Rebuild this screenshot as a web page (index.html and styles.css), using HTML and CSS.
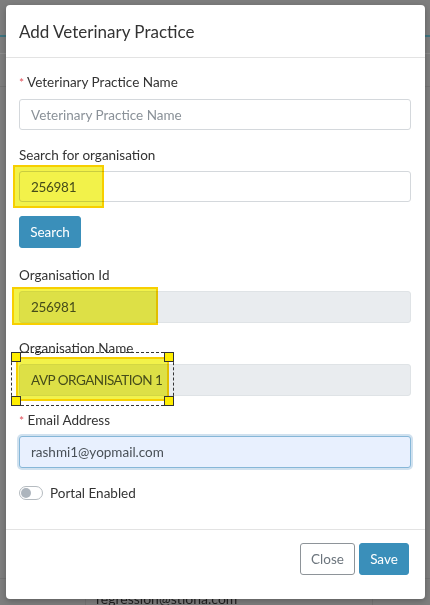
FILE: index.html
```html
<!DOCTYPE html>
<html lang="en">
<head>
<meta charset="utf-8">
<title>Add Veterinary Practice</title>
<link rel="stylesheet" href="styles.css">
</head>
<body>
<div class="page-behind">
  <div class="bg-line l1"></div>
  <div class="bg-line l2"></div>
  <div class="bg-line l3"></div>
  <div class="bg-line l4"></div>
  <div class="bg-vline v1"></div>
  <div class="bg-vline v2"></div>
  <div class="bg-text">regression@stiona.com</div>
</div>

<div class="modal">
  <div class="modal-header">
    <h1 class="modal-title">Add Veterinary Practice</h1>
  </div>
  <div class="modal-body">
    <div class="group">
      <label class="label"><span class="req">*</span> Veterinary Practice Name</label>
      <input class="input" type="text" placeholder="Veterinary Practice Name">
    </div>
    <div class="group group-search">
      <label class="label">Search for organisation</label>
      <input class="input input-num" type="text" value="256981">
      <button class="btn btn-primary btn-search">Search</button>
    </div>
    <div class="group">
      <label class="label">Organisation Id</label>
      <input class="input input-tall input-num" type="text" value="256981" disabled>
    </div>
    <div class="group">
      <label class="label">Organisation Name</label>
      <input class="input input-tall input-caps" type="text" value="AVP ORGANISATION 1" disabled>
    </div>
    <div class="group">
      <label class="label label-email"><span class="req">*</span> Email Address</label>
      <input class="input input-focus" type="text" value="rashmi1@yopmail.com">
    </div>
    <div class="switch-row">
      <span class="switch"><span class="knob"></span></span>
      <span class="switch-label">Portal Enabled</span>
    </div>
  </div>
  <div class="modal-footer">
    <button class="btn btn-outline">Close</button>
    <button class="btn btn-primary">Save</button>
  </div>

  <div class="hl hl-search"></div>
  <div class="hl hl-id"></div>
  <div class="hl hl-name"></div>
  <div class="sel-box"></div>
  <span class="handle h-tl"></span>
  <span class="handle h-tr"></span>
  <span class="handle h-bl"></span>
  <span class="handle h-br"></span>
</div>
</body>
</html>
```

FILE: styles.css
```css
* { box-sizing: border-box; }

html, body {
  margin: 0;
  padding: 0;
}

body {
  width: 430px;
  height: 605px;
  overflow: hidden;
  background: #7e7e7e;
  font-family: Lato, "Open Sans", sans-serif;
  color: #333;
  position: relative;
  padding: 5px 5px 0 6px;
}

.page-behind {
  position: absolute;
  inset: 0;
}

.bg-line {
  position: absolute;
  left: 0;
  right: 0;
  height: 1px;
}
.l1 { top: 35px; background: #3f7580; height: 2px; }
.l2 { top: 53px; background: #8c8c8c; }
.l3 { top: 86px; background: #747474; }
.l4 { top: 578px; background: #747474; }

.bg-vline {
  position: absolute;
  top: 560px;
  bottom: 0;
  width: 1px;
  background: #747474;
}
.v1 { left: 85px; }
.v2 { left: 372px; }

.bg-text {
  position: absolute;
  left: 96px;
  top: 591px;
  font-size: 14px;
  line-height: 16px;
  color: #1f1f1f;
}

.modal {
  position: relative;
  width: 419px;
  height: 594px;
  background: #fff;
  border-radius: 4px;
  display: flex;
  flex-direction: column;
  box-shadow: 0 2px 6px rgba(0,0,0,0.25);
}

.modal-header {
  height: 53px;
  padding: 0 13px;
  display: flex;
  align-items: center;
  border-bottom: 1px solid #e3e3e3;
}

.modal-title {
  margin: 0;
  font-size: 17px;
  font-weight: 400;
  color: #333;
}

.modal-body {
  flex: 1;
  padding: 15px 14px 0 13px;
}

.group {
  margin-bottom: 16px;
}

.group-search {
  margin-bottom: 18px;
}

.label {
  display: block;
  font-size: 13.5px;
  line-height: 18px;
  margin-bottom: 7px;
  color: #333;
}

.label-email {
  margin-top: -1px;
  margin-bottom: 6px;
}

.req {
  color: #e0525c;
  font-size: 12px;
}

.input {
  display: block;
  width: 100%;
  height: 31px;
  padding: 0 11px;
  font: inherit;
  font-size: 13.5px;
  color: #495057;
  background: #fff;
  border: 1px solid #d4d8dc;
  border-radius: 3px;
  outline: none;
}

.input-tall { height: 32px; }
.input-num { letter-spacing: -0.3px; }
.input-caps { letter-spacing: -0.5px; }

.input::placeholder { color: #8a9198; }

.input:disabled {
  background: #e9ecef;
  border-color: #dfe3e6;
  color: #495057;
}

.input-focus {
  height: 32px;
  background: #e8f0fe;
  border-color: #86b7d8;
  box-shadow: 0 0 0 2px rgba(120, 170, 210, 0.35);
}

.btn {
  font: inherit;
  font-size: 13.5px;
  height: 32px;
  padding: 0 10px;
  border-radius: 3px;
  border: 1px solid transparent;
  cursor: pointer;
}

.btn-primary {
  background: #3a8fba;
  border-color: #3a8fba;
  color: #fff;
}

.btn-outline {
  background: #fff;
  border-color: #8e9499;
  color: #6c757d;
}

.btn-search {
  margin-top: 14px;
  width: 62px;
}

.switch-row {
  display: flex;
  align-items: center;
  gap: 7px;
  margin-top: 17px;
}

.switch {
  position: relative;
  width: 24px;
  height: 14px;
  border: 1px solid #b5bbc0;
  border-radius: 7px;
  background: #fff;
}

.knob {
  position: absolute;
  left: 1px;
  top: 1px;
  width: 10px;
  height: 10px;
  border-radius: 50%;
  background: #adb5bd;
}

.switch-label {
  font-size: 13.5px;
  color: #333;
}

.modal-footer {
  height: 70px;
  border-top: 1px solid #e3e3e3;
  display: flex;
  justify-content: flex-end;
  align-items: flex-start;
  gap: 4px;
  padding: 13px 16px 0 0;
}

.modal-footer .btn-outline { width: 55px; }
.modal-footer .btn-primary { width: 50px; }

/* annotation overlays */
.hl {
  position: absolute;
  background: #f2f24a;
  mix-blend-mode: multiply;
  border: 2px solid #f7cf00;
}
.hl-search { left: 7px; top: 160px; width: 91px; height: 43px; }
.hl-id { left: 6px; top: 282px; width: 146px; height: 38px; }
.hl-name { left: 10px; top: 352px; width: 153px; height: 44px; }

.sel-box {
  position: absolute;
  left: 5px;
  top: 347px;
  width: 163px;
  height: 54px;
  border: 1px dashed #333;
}

.handle {
  position: absolute;
  width: 10px;
  height: 10px;
  background: #ffee00;
  border: 1px solid #333;
}
.h-tl { left: 5px; top: 347px; }
.h-tr { left: 158px; top: 347px; }
.h-bl { left: 5px; top: 391px; }
.h-br { left: 158px; top: 391px; }
```
